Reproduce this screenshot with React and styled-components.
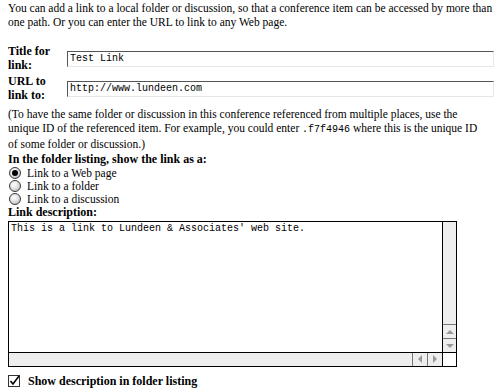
import React from "react";
import styled, { createGlobalStyle } from "styled-components";

const Global = createGlobalStyle`
  html, body { margin: 0; padding: 0; background: #fff; }
  body {
    padding: 1px 8px 0 8px;
    font-family: "Liberation Serif", "Times New Roman", serif;
    font-size: 11.5px;
    line-height: 14px;
    color: #000;
  }
`;

const Page = styled.div`
  width: 486px;
  display: flex;
  flex-direction: column;
`;

const Para = styled.p`
  margin: ${(p) => p.$m || "0"};
  white-space: nowrap;
`;

const Code = styled.span`
  font-family: "Liberation Mono", "Courier New", monospace;
  font-size: 10px;
`;

const FieldTable = styled.div`
  display: grid;
  grid-template-columns: 59px 1fr;
  row-gap: 2px;
  margin-top: 15px;
`;

const Label = styled.div`
  font-weight: bold;
  font-size: 12px;
  line-height: 14px;
`;

const TextInput = styled.div`
  align-self: center;
  height: 16px;
  box-sizing: border-box;
  border-top: 1px solid #555;
  border-left: 1px solid #555;
  border-right: 1px solid #e6e6e6;
  border-bottom: 1px solid #e6e6e6;
  font-family: "Liberation Mono", "Courier New", monospace;
  font-size: 10px;
  line-height: 14px;
  padding-left: 2px;
  margin-top: 1px;
  white-space: nowrap;
  overflow: hidden;
`;

const Heading = styled.div`
  font-weight: bold;
  font-size: 12px;
  margin-top: ${(p) => p.$mt || "0"};
`;

const RadioList = styled.div`
  display: flex;
  flex-direction: column;
`;

const RadioRow = styled.label`
  display: flex;
  align-items: center;
  gap: 6px;
  height: 13px;
`;

const RadioDot = styled.span`
  width: 12px;
  height: 12px;
  box-sizing: border-box;
  border-radius: 50%;
  border: 1px solid #3a3a3a;
  background: radial-gradient(circle at 40% 35%, #fff 0%, #e4e4e4 45%, #a8a8a8 100%);
  display: flex;
  align-items: center;
  justify-content: center;
  margin-left: 1px;
  &::after {
    content: "";
    width: 6px;
    height: 6px;
    border-radius: 50%;
    background: #000;
    display: ${(p) => (p.$on ? "block" : "none")};
  }
`;

const TextAreaBox = styled.div`
  margin-top: 2px;
  width: 449px;
  height: 146px;
  box-sizing: border-box;
  border: 1px solid #000;
  display: grid;
  grid-template-columns: 1fr 14px;
  grid-template-rows: 1fr 14px;
`;

const TextContent = styled.div`
  font-family: "Liberation Mono", "Courier New", monospace;
  font-size: 10px;
  line-height: 14px;
  padding: 0 2px;
  white-space: pre;
  overflow: hidden;
`;

const VScroll = styled.div`
  background: #eee;
  border-left: 1px solid #000;
  display: flex;
  flex-direction: column;
  justify-content: flex-end;
`;

const HScroll = styled.div`
  background: #eee;
  border-top: 1px solid #000;
  display: flex;
  justify-content: flex-end;
`;

const Corner = styled.div`
  background: #fff;
  border-top: 1px solid #000;
  border-left: 1px solid #000;
`;

const ArrowBtn = styled.div`
  width: ${(p) => (p.$h ? "15px" : "13px")};
  height: ${(p) => (p.$h ? "13px" : "14px")};
  box-sizing: border-box;
  display: flex;
  align-items: center;
  justify-content: center;
  border-top: ${(p) => (p.$h ? "none" : "1px solid #777")};
  border-left: ${(p) => (p.$h ? "1px solid #777" : "none")};
`;

const CheckRow = styled.div`
  display: flex;
  align-items: center;
  gap: 8px;
  margin-top: 7px;
  font-weight: bold;
  font-size: 12px;
`;

const CheckBox = styled.span`
  width: 12px;
  height: 12px;
  display: inline-flex;
`;

const Tri = ({ dir }) => {
  const pts = {
    up: "1,5 5,1 9,5",
    down: "1,1 5,5 9,1",
    left: "5,0 1,4 5,8",
    right: "1,0 5,4 1,8",
  }[dir];
  const vertical = dir === "up" || dir === "down";
  return (
    <svg width={vertical ? 10 : 6} height={vertical ? 6 : 9} viewBox={vertical ? "0 0 10 6" : "0 0 6 9"}>
      <polygon points={pts} fill="#999" />
    </svg>
  );
};

export default function App() {
  return (
    <>
      <Global />
      <Page>
        <Para>
          You can add a link to a local folder or discussion, so that a conference item can be accessed by more than
          <br />
          one path. Or you can enter the URL to link to any Web page.
        </Para>
        <FieldTable>
          <Label>
            Title for
            <br />
            link:
          </Label>
          <TextInput>Test Link</TextInput>
          <Label>
            URL to
            <br />
            link to:
          </Label>
          <TextInput>http://www.lundeen.com</TextInput>
        </FieldTable>
        <Para $m="5px 0 0 0">
          (To have the same folder or discussion in this conference referenced from multiple places, use the
          <br />
          unique ID of the referenced item. For example, you could enter <Code>.f7f4946</Code> where this is the unique ID
          <br />
          of some folder or discussion.)
        </Para>
        <Heading $mt="1px">In the folder listing, show the link as a:</Heading>
        <RadioList>
          <RadioRow>
            <RadioDot $on />
            Link to a Web page
          </RadioRow>
          <RadioRow>
            <RadioDot />
            Link to a folder
          </RadioRow>
          <RadioRow>
            <RadioDot />
            Link to a discussion
          </RadioRow>
        </RadioList>
        <Heading $mt="0px">Link description:</Heading>
        <TextAreaBox>
          <TextContent>This is a link to Lundeen &amp; Associates' web site.</TextContent>
          <VScroll>
            <ArrowBtn>
              <Tri dir="up" />
            </ArrowBtn>
            <ArrowBtn>
              <Tri dir="down" />
            </ArrowBtn>
          </VScroll>
          <HScroll>
            <ArrowBtn $h>
              <Tri dir="left" />
            </ArrowBtn>
            <ArrowBtn $h>
              <Tri dir="right" />
            </ArrowBtn>
          </HScroll>
          <Corner />
        </TextAreaBox>
        <CheckRow>
          <CheckBox>
            <svg width="12" height="12" viewBox="0 0 12 12">
              <rect x="0.5" y="0.5" width="11" height="11" fill="#fff" stroke="#333" />
              <polyline points="2.5,6 5,9 11,1" fill="none" stroke="#000" strokeWidth="1.5" />
            </svg>
          </CheckBox>
          Show description in folder listing
        </CheckRow>
      </Page>
    </>
  );
}
